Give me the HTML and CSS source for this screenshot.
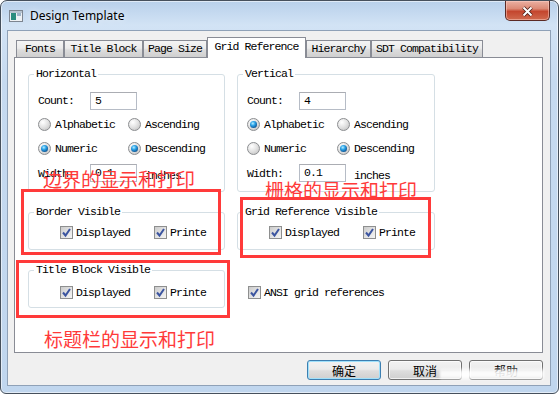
FILE: index.html
```html
<!DOCTYPE html>
<html lang="zh-CN">
<head>
  <meta charset="UTF-8">
  <title>Design Template</title>
  <link rel="stylesheet" href="styles.css">
</head>
<body>
  <div class="window">
    <div class="titlebar">
      <svg class="app-icon" width="14" height="12" viewBox="0 0 14 12">
        <rect x="0.5" y="0.5" width="13" height="11" fill="#eef1f4" stroke="#7d8590"/>
        <rect x="1" y="1" width="12" height="2" fill="#b7c3cf"/>
        <rect x="2" y="3" width="5" height="7" fill="#2b8c7e"/>
        <rect x="8" y="3" width="4" height="3" fill="#9fb4c8"/>
      </svg>
      <span class="title">Design Template</span>
      <button class="close-btn">
        <svg width="13" height="11" viewBox="0 0 13 11">
          <path d="M2.5 1.5l8 8M10.5 1.5l-8 8" stroke="#4a1d15" stroke-width="3.6"/>
          <path d="M2.5 1.5l8 8M10.5 1.5l-8 8" stroke="#fff" stroke-width="2"/>
        </svg>
      </button>
    </div>

    <div class="client">
      <div class="tabs">
        <div class="tab tab-fonts">Fonts</div>
        <div class="tab tab-title">Title Block</div>
        <div class="tab tab-page">Page Size</div>
        <div class="tab tab-grid active">Grid Reference</div>
        <div class="tab tab-hier">Hierarchy</div>
        <div class="tab tab-sdt">SDT Compatibility</div>
      </div>

      <div class="panel">
        <fieldset class="group axis">
          <legend>Horizontal</legend>
          <div class="line line-count"><span class="lbl">Count:</span><span class="field">5</span></div>
          <div class="line line-opt">
            <span class="opt"><span class="radio"></span>Alphabetic</span>
            <span class="opt"><span class="radio"></span>Ascending</span>
          </div>
          <div class="line line-opt">
            <span class="opt"><span class="radio on"></span>Numeric</span>
            <span class="opt"><span class="radio on"></span>Descending</span>
          </div>
          <div class="line line-width"><span class="lbl">Width:</span><span class="field">0.1</span><span class="unit">inches</span></div>
        </fieldset>

        <fieldset class="group axis">
          <legend>Vertical</legend>
          <div class="line line-count"><span class="lbl">Count:</span><span class="field">4</span></div>
          <div class="line line-opt">
            <span class="opt"><span class="radio on"></span>Alphabetic</span>
            <span class="opt"><span class="radio"></span>Ascending</span>
          </div>
          <div class="line line-opt">
            <span class="opt"><span class="radio"></span>Numeric</span>
            <span class="opt"><span class="radio on"></span>Descending</span>
          </div>
          <div class="line line-width"><span class="lbl">Width:</span><span class="field">0.1</span><span class="unit">inches</span></div>
        </fieldset>

        <fieldset class="group visible">
          <legend>Border Visible</legend>
          <div class="line line-check">
            <span class="opt-check"><span class="check"><svg width="11" height="11" viewBox="0 0 11 11"><path d="M2 5.5l2.5 3L9 2" fill="none" stroke="#3c55a0" stroke-width="2"/></svg></span>Displayed</span>
            <span class="opt-check"><span class="check"><svg width="11" height="11" viewBox="0 0 11 11"><path d="M2 5.5l2.5 3L9 2" fill="none" stroke="#3c55a0" stroke-width="2"/></svg></span>Printe</span>
          </div>
        </fieldset>

        <fieldset class="group visible">
          <legend>Grid Reference Visible</legend>
          <div class="line line-check">
            <span class="opt-check"><span class="check"><svg width="11" height="11" viewBox="0 0 11 11"><path d="M2 5.5l2.5 3L9 2" fill="none" stroke="#3c55a0" stroke-width="2"/></svg></span>Displayed</span>
            <span class="opt-check"><span class="check"><svg width="11" height="11" viewBox="0 0 11 11"><path d="M2 5.5l2.5 3L9 2" fill="none" stroke="#3c55a0" stroke-width="2"/></svg></span>Printe</span>
          </div>
        </fieldset>

        <fieldset class="group visible title-block">
          <legend>Title Block Visible</legend>
          <div class="line line-check">
            <span class="opt-check"><span class="check"><svg width="11" height="11" viewBox="0 0 11 11"><path d="M2 5.5l2.5 3L9 2" fill="none" stroke="#3c55a0" stroke-width="2"/></svg></span>Displayed</span>
            <span class="opt-check"><span class="check"><svg width="11" height="11" viewBox="0 0 11 11"><path d="M2 5.5l2.5 3L9 2" fill="none" stroke="#3c55a0" stroke-width="2"/></svg></span>Printe</span>
          </div>
        </fieldset>

        <div class="ansi">
          <span class="opt-check"><span class="check"><svg width="11" height="11" viewBox="0 0 11 11"><path d="M2 5.5l2.5 3L9 2" fill="none" stroke="#3c55a0" stroke-width="2"/></svg></span>ANSI grid references</span>
        </div>
      </div>

      <div class="buttons">
        <button class="btn default">确定</button>
        <button class="btn">取消</button>
        <button class="btn">帮助</button>
      </div>
    </div>
  </div>

  <!-- red annotations drawn over the dialog -->
  <div class="note note-border">边界的显示和打印</div>
  <div class="note note-grid">栅格的显示和打印</div>
  <div class="note note-title">标题栏的显示和打印</div>
  <div class="mark mark-border"></div>
  <div class="mark mark-grid"></div>
  <div class="mark mark-title"></div>
  <div class="smear"></div>
</body>
</html>
```

FILE: styles.css
```css
body {
  margin: 0;
  width: 559px;
  height: 394px;
  position: relative;
  overflow: hidden;
  background: #fff;
  font-family: "Liberation Mono", monospace;
  font-size: 11.5px;
  letter-spacing: -0.9px;
  color: #000;
}
.window {
  width: 559px;
  height: 394px;
  box-sizing: border-box;
  border: 1px solid #46505c;
  border-radius: 7px 7px 6px 6px;
  background: linear-gradient(180deg, #b8d0ea 0, #d2e3f5 24px, #c6daf0 80px, #c0d6ee 100%);
  box-shadow: inset 0 0 0 1px rgba(255, 255, 255, 0.55);
  display: flex;
  flex-direction: column;
  padding-bottom: 7px;
}
.titlebar {
  height: 29px;
  flex-shrink: 0;
  display: flex;
  align-items: center;
  padding-left: 8px;
}
.app-icon {
  flex-shrink: 0;
}
.title {
  margin-left: 7px;
  font-family: "Noto Sans", sans-serif;
  font-size: 12px;
  letter-spacing: 0;
  color: #000;
  text-shadow: 0 0 6px rgba(255, 255, 255, 0.9);
}
.close-btn {
  align-self: flex-start;
  margin-left: auto;
  margin-right: 8px;
  width: 45px;
  height: 20px;
  box-sizing: border-box;
  padding: 2px 0 0;
  border: 1px solid #5b2a24;
  border-top: none;
  border-radius: 0 0 5px 5px;
  background: linear-gradient(180deg, #eab0a2 0, #dc8a76 40%, #c4462e 55%, #d06a4e 100%);
  box-shadow: inset 0 0 0 1px rgba(255, 210, 200, 0.5);
  display: flex;
  align-items: center;
  justify-content: center;
}
.client {
  flex: 1;
  margin: 0 7px 0 6px;
  border: 1px solid #8fa1b7;
  background: #f0f0f0;
  padding: 6px 7px 0 6px;
  display: flex;
  flex-direction: column;
}

/* tabs */
.tabs {
  height: 20px;
  display: flex;
  align-items: flex-end;
  padding-left: 2px;
}
.tab {
  box-sizing: border-box;
  height: 17px;
  border: 1px solid #898c95;
  border-bottom: none;
  background: linear-gradient(180deg, #f4f4f4 0, #ebebeb 45%, #dddddd 55%, #cfcfcf 100%);
  text-align: center;
  line-height: 16px;
  white-space: nowrap;
}
.tab.active {
  height: 21px;
  margin-bottom: -1px;
  background: #fff;
  line-height: 17px;
  position: relative;
  z-index: 1;
}
.tab-fonts { width: 48px; }
.tab-title { width: 79px; }
.tab-page { width: 64px; }
.tab-grid { width: 99px; }
.tab-hier { width: 65px; }
.tab-sdt { width: 112px; }

.panel {
  box-sizing: border-box;
  height: 296px;
  flex-shrink: 0;
  border: 1px solid #898c95;
  background: #fff;
  padding: 10px 0 0 13px;
  display: grid;
  grid-template-columns: 197px 198px;
  column-gap: 12px;
  row-gap: 14px;
  align-content: start;
  align-items: start;
}

/* group boxes */
.group {
  margin: 0;
  min-width: 0;
  border: 1px solid #d5dfe5;
  border-radius: 3px;
  padding: 0;
}
.group legend {
  margin-left: 5px;
  padding: 0 2px;
  line-height: 12px;
}
.axis {
  padding: 9px 0 5px;
}
.axis .line {
  padding-left: 9px;
}
.visible {
  padding: 4px 0 7px;
}
.visible .line {
  padding-left: 31px;
}
.title-block {
  padding-top: 6px;
  padding-bottom: 5px;
}
.line {
  display: flex;
  align-items: center;
  white-space: nowrap;
}
.line-count { height: 23px; }
.line-opt { height: 24px; }
.line-width { height: 26px; }
.line-check { height: 20px; }
.lbl {
  width: 52px;
  flex-shrink: 0;
}
.field {
  box-sizing: border-box;
  width: 47px;
  height: 18px;
  flex-shrink: 0;
  border: 1px solid #b6bcc6;
  border-top-color: #abadb3;
  padding-left: 4px;
  line-height: 16px;
  background: #fff;
}
.unit {
  margin-left: 8px;
  padding-top: 4px;
}
.opt {
  width: 90px;
  flex-shrink: 0;
  display: flex;
  align-items: center;
}
.radio {
  box-sizing: border-box;
  width: 13px;
  height: 13px;
  flex-shrink: 0;
  margin-right: 4px;
  border-radius: 50%;
  border: 1px solid #8b8d90;
  background: radial-gradient(circle at 35% 30%, #ffffff 0, #e4e4e4 45%, #bcbcbc 100%);
  display: flex;
  align-items: center;
  justify-content: center;
}
.radio.on::after {
  content: "";
  width: 7px;
  height: 7px;
  border-radius: 50%;
  background: radial-gradient(circle at 40% 35%, #b8eeff 0, #2ba3e8 35%, #0f5594 75%, #0a3a6b 100%);
}
.opt-check {
  width: 94px;
  flex-shrink: 0;
  display: flex;
  align-items: center;
}
.check {
  box-sizing: border-box;
  width: 13px;
  height: 13px;
  margin-right: 3px;
  border: 1px solid #8e8f8f;
  background: linear-gradient(135deg, #cbcbcb 0, #e6e6e6 60%, #f4f4f4 100%);
  display: flex;
  flex-shrink: 0;
}
.ansi {
  padding: 18px 0 0 11px;
  height: 20px;
  display: flex;
  align-items: center;
  white-space: nowrap;
}
.ansi .opt-check {
  width: auto;
}

/* dialog buttons */
.buttons {
  margin-top: 7px;
  display: flex;
  justify-content: flex-end;
  gap: 7px;
}
.btn {
  box-sizing: border-box;
  width: 74px;
  height: 20px;
  padding: 0;
  border: 1px solid #707070;
  border-radius: 3px;
  background: linear-gradient(180deg, #f2f2f2 0, #ebebeb 45%, #dddddd 55%, #cfcfcf 100%);
  box-shadow: inset 0 0 0 1px rgba(255, 255, 255, 0.7);
  font-family: "Noto Sans CJK SC", sans-serif;
  font-size: 12px;
  letter-spacing: 0;
  line-height: 17px;
  color: #000;
}
.btn.default {
  border-color: #3c7fb1;
  box-shadow: inset 0 0 0 1px #9fe0fb;
}

/* annotations */
.note {
  position: absolute;
  color: #ff3a3a;
  font-family: "Noto Sans CJK SC", sans-serif;
  font-size: 19px;
  line-height: 19px;
  letter-spacing: 0;
  white-space: nowrap;
}
.note-border { left: 43px; top: 169px; }
.note-grid { left: 265px; top: 180px; }
.note-title { left: 44px; top: 329px; }
.mark {
  position: absolute;
  box-sizing: border-box;
  border: 3px solid #ff3a3a;
}
.mark-border { left: 21px; top: 189px; width: 200px; height: 66px; }
.mark-grid { left: 240px; top: 197px; width: 191px; height: 61px; }
.mark-title { left: 16px; top: 260px; width: 214px; height: 58px; }
.smear {
  position: absolute;
  left: 440px;
  top: 368px;
  width: 104px;
  height: 12px;
  background: linear-gradient(180deg, rgba(255, 255, 255, 0.2), rgba(255, 255, 255, 0.9) 35%, rgba(255, 255, 255, 0.9) 70%, rgba(255, 255, 255, 0.3));
  filter: blur(1px);
}
```
